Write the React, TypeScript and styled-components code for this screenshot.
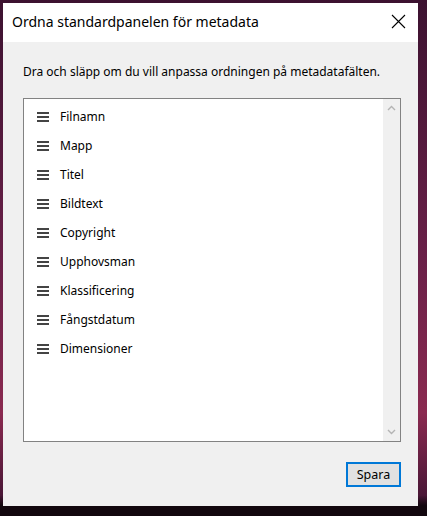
import React from 'react';
import styled, { createGlobalStyle } from 'styled-components';

const fields = [
  'Filnamn',
  'Mapp',
  'Titel',
  'Bildtext',
  'Copyright',
  'Upphovsman',
  'Klassificering',
  'Fångstdatum',
  'Dimensioner',
];

const GlobalStyle = createGlobalStyle`
  html, body {
    margin: 0;
    padding: 0;
  }
  body {
    font-family: 'Noto Sans', 'Open Sans', sans-serif;
  }
`;

const Desktop = styled.div`
  width: 427px;
  height: 516px;
  box-sizing: border-box;
  padding: 3px 9px 10px 3px;
  background:
    linear-gradient(180deg, transparent 0 96%, #12070e 98%),
    linear-gradient(180deg, #3c1230 0%, #6a2048 50%, #8a2a50 80%, #3a1230 100%);
`;

const Dialog = styled.div`
  width: 415px;
  height: 503px;
  display: flex;
  flex-direction: column;
  background: #f0f0f0;
`;

const TitleBar = styled.div`
  height: 39px;
  flex: none;
  display: flex;
  align-items: center;
  justify-content: space-between;
  padding: 0 12px 0 9px;
  background: #ffffff;
`;

const Title = styled.div`
  font-size: 14px;
  color: #000;
  margin-top: -2px;
`;

const Close = styled.div`
  width: 16px;
  height: 16px;
  display: flex;
  align-items: center;
  justify-content: center;
  margin-top: -2px;
`;

const Body = styled.div`
  flex: 1;
  display: flex;
  flex-direction: column;
  padding: 20px 17px 19px 20px;
`;

const Intro = styled.div`
  font-size: 12px;
  color: #000;
  height: 20px;
  line-height: 20px;
  margin-bottom: 16px;
`;

const ListBox = styled.div`
  height: 342px;
  display: flex;
  border: 1px solid #828282;
  background: #ffffff;
`;

const List = styled.ul`
  flex: 1;
  list-style: none;
  margin: 0;
  padding: 3px 0 0 0;
`;

const Row = styled.li`
  height: 29px;
  display: flex;
  align-items: center;
  padding-left: 13px;
  font-size: 12px;
  color: #000;
`;

const Grip = styled.span`
  width: 12px;
  height: 10px;
  margin-right: 11px;
  display: flex;
  flex-direction: column;
  justify-content: space-between;

  i {
    display: block;
    height: 2px;
    background: #444444;
  }
`;

const Scrollbar = styled.div`
  width: 17px;
  display: flex;
  flex-direction: column;
  justify-content: space-between;
  align-items: center;
  padding: 6px 0;
  background: #f0f0f0;
`;

const Footer = styled.div`
  display: flex;
  justify-content: flex-end;
  margin-top: 20px;
`;

const Button = styled.button`
  width: 55px;
  height: 25px;
  padding: 0;
  border: 2px solid #0078d7;
  background: #e1e1e1;
  font-family: inherit;
  font-size: 12.5px;
  color: #000;
`;

const Chevron = ({ up }: { up?: boolean }) => (
  <svg width="9" height="6" viewBox="0 0 9 6">
    <path
      d={up ? 'M1 5 L4.5 1.5 L8 5' : 'M1 1 L4.5 4.5 L8 1'}
      fill="none"
      stroke="#b4b4b4"
      strokeWidth="1.4"
    />
  </svg>
);

export default function App() {
  return (
    <>
      <GlobalStyle />
      <Desktop>
        <Dialog>
          <TitleBar>
            <Title>Ordna standardpanelen för metadata</Title>
            <Close>
              <svg width="15" height="15" viewBox="0 0 15 15">
                <path d="M1 1 L14 14 M14 1 L1 14" stroke="#000" strokeWidth="1.1" />
              </svg>
            </Close>
          </TitleBar>
          <Body>
            <Intro>Dra och släpp om du vill anpassa ordningen på metadatafälten.</Intro>
            <ListBox>
              <List>
                {fields.map(f => (
                  <Row key={f}>
                    <Grip>
                      <i />
                      <i />
                      <i />
                    </Grip>
                    {f}
                  </Row>
                ))}
              </List>
              <Scrollbar>
                <Chevron up />
                <Chevron />
              </Scrollbar>
            </ListBox>
            <Footer>
              <Button>Spara</Button>
            </Footer>
          </Body>
        </Dialog>
      </Desktop>
    </>
  );
}
